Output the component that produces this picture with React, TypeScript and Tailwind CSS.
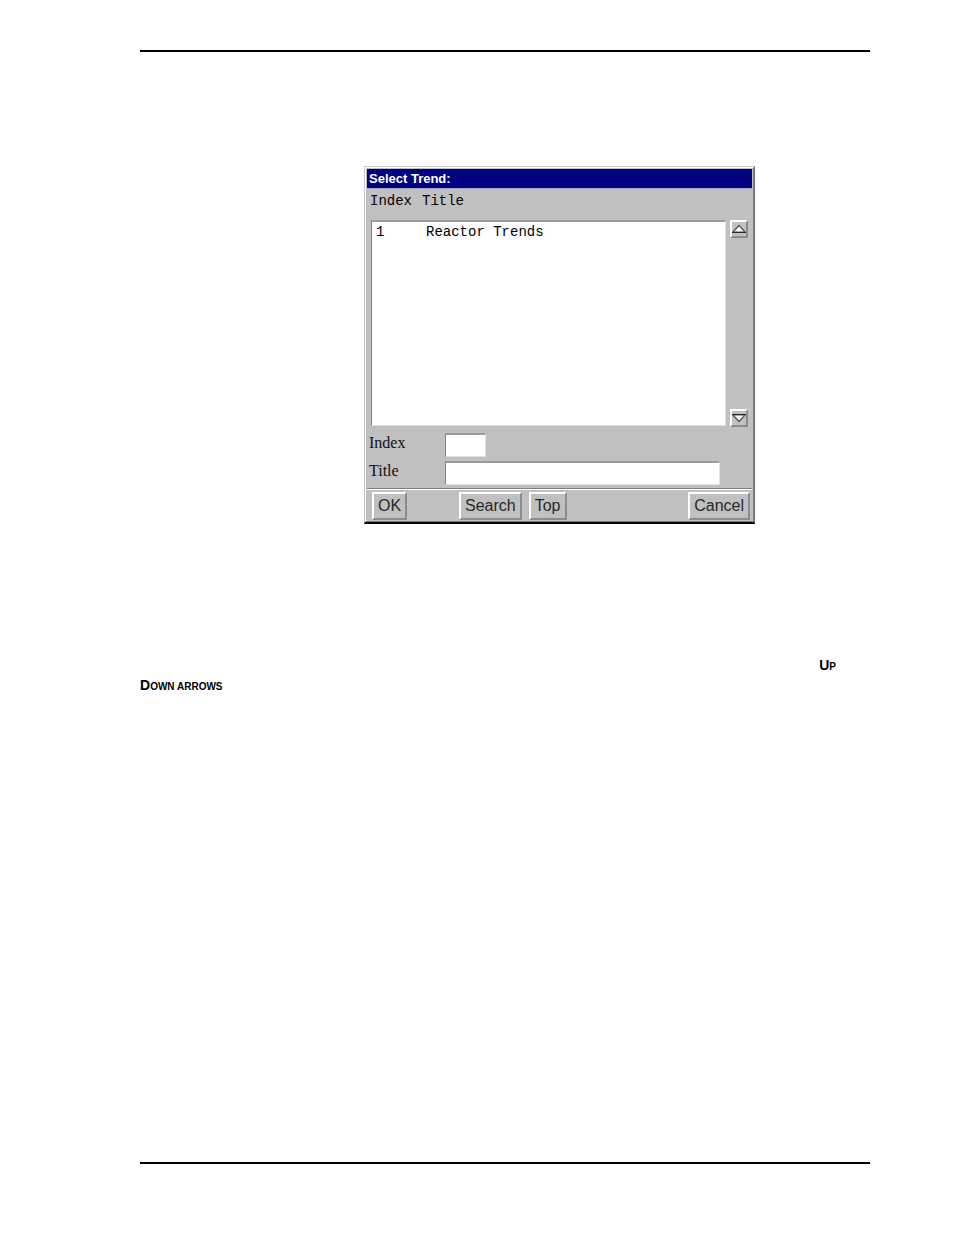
import React from 'react';

type Trend = { index: number; title: string };

const trends: Trend[] = [{ index: 1, title: 'Reactor Trends' }];

const raised =
  'border-2 border-t-white border-l-white border-r-[#8c8c8c] border-b-[#8c8c8c] bg-[#c0c0c0]';
const sunken =
  'rounded-none border border-t-2 border-t-[#9c9c9c] border-l-[#808080] border-r-[#e4e4e4] border-b-[#e4e4e4] bg-white';

function DialogButton({ children }: { children: React.ReactNode }) {
  return (
    <button
      type="button"
      className={`${raised} h-7 px-1 text-base leading-6 text-[#282828]`}
    >
      {children}
    </button>
  );
}

function ScrollButton({ direction }: { direction: 'up' | 'down' }) {
  const up = direction === 'up';
  return (
    <button
      type="button"
      aria-label={up ? 'Scroll up' : 'Scroll down'}
      className={`${raised} flex h-[18px] w-[18px] items-center justify-center`}
    >
      <svg width="14" height="14" viewBox="0 0 14 14" className="shrink-0">
        {up ? (
          <>
            <path d="M1 10 L7 3.5 L13 10 Z" fill="#fff" stroke="#505050" strokeWidth="1.2" />
            <path d="M0 10.5 H14" stroke="#282828" />
          </>
        ) : (
          <>
            <path d="M1 4 L7 10.5 L13 4 Z" fill="#fff" stroke="#505050" strokeWidth="1.2" />
            <path d="M0 3.5 H14" stroke="#282828" />
          </>
        )}
      </svg>
    </button>
  );
}

function SelectTrendDialog() {
  return (
    <section
      aria-labelledby="dialog-title"
      className="w-full max-w-[391px] border border-t-[#c8c8c8] border-r-[#707070] border-b-2 border-b-black border-l-[#c8c8c8] bg-[#c0c0c0]"
    >
      <div className="border border-t-white border-r-[#808080] border-b-[#808080] border-l-white p-px">
        <h1
          id="dialog-title"
          className="h-[19px] bg-[#000080] px-[2px] text-[13px] leading-[19px] font-bold text-white"
        >
          Select Trend:
        </h1>

        <div className="grid h-8 grid-cols-[52px_1fr] border-t border-[#a8a8c8] pt-1 pl-[3px] font-['Liberation_Mono',monospace] text-sm leading-4">
          <span>Index</span>
          <span>Title</span>
        </div>

        <div className="flex h-[207px] gap-1 px-1">
          <ul
            role="listbox"
            aria-label="Trends"
            className={`${sunken} mb-px flex-1 px-1 pt-[2px] font-['Liberation_Mono',monospace] text-sm leading-4`}
          >
            {trends.map((trend) => (
              <li
                key={trend.index}
                role="option"
                aria-selected="false"
                className="grid grid-cols-[50px_1fr]"
              >
                <span>{trend.index}</span>
                <span>{trend.title}</span>
              </li>
            ))}
          </ul>
          <div className="flex flex-col justify-between">
            <ScrollButton direction="up" />
            <ScrollButton direction="down" />
          </div>
        </div>

        <form className="grid grid-cols-[76px_1fr] gap-y-1 pt-[6px] pr-8 pb-[3px] pl-[2px] font-['Liberation_Serif',serif] text-base leading-5 text-[#101010]">
          <label htmlFor="trend-index">Index</label>
          <input id="trend-index" type="text" className={`${sunken} h-6 w-[41px]`} />
          <label htmlFor="trend-title">Title</label>
          <input id="trend-title" type="text" className={`${sunken} h-6 w-full`} />
        </form>

        <div className="border-t border-[#808080]">
          <div className="flex border-t border-white pt-[2px] pr-[2px] pl-[5px]">
            <div className="w-[87px]">
              <DialogButton>OK</DialogButton>
            </div>
            <div className="flex flex-1 gap-[7px]">
              <DialogButton>Search</DialogButton>
              <DialogButton>Top</DialogButton>
            </div>
            <DialogButton>Cancel</DialogButton>
          </div>
        </div>
      </div>
    </section>
  );
}

export default function App() {
  return (
    <div className="flex min-h-screen flex-col bg-white pt-[50px] pr-[84px] pb-[71px] pl-[140px] font-['Liberation_Sans',Arial,sans-serif] text-black">
      <main className="flex-1 border-y-2 border-black">
        <div className="pt-[114px] pl-56">
          <SelectTrendDialog />
        </div>
        <div className="mt-[132px] font-['Liberation_Sans_Narrow','Liberation_Sans',sans-serif] text-sm leading-[19px] font-bold">
          <p className="pr-[34px] text-right">
            U<span className="text-[10px]">P</span>
          </p>
          <p>
            D<span className="text-[10px]">OWN ARROWS</span>
          </p>
        </div>
      </main>
    </div>
  );
}
